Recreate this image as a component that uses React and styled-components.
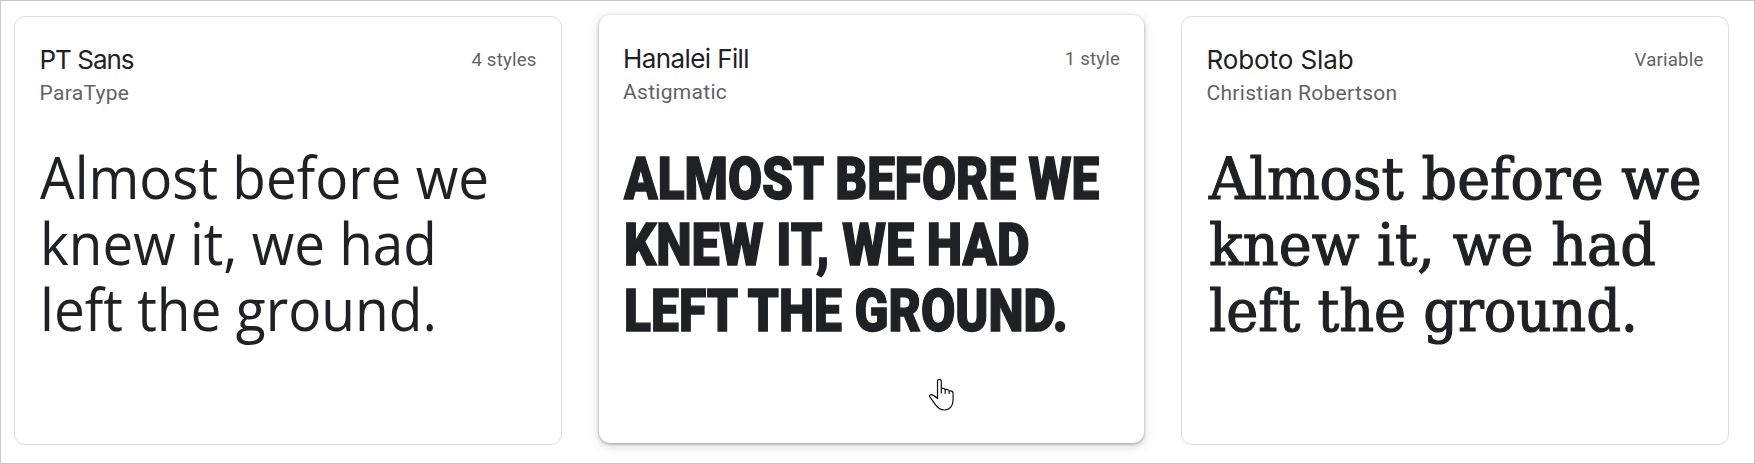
import React from 'react';
import styled, { createGlobalStyle, css } from 'styled-components';

const GlobalStyle = createGlobalStyle`
  * { box-sizing: border-box; }
  body { margin: 0; background: #fff; font-family: Roboto, "Liberation Sans", sans-serif; }
`;

const Page = styled.main`
  display: flex;
  align-items: flex-start;
  gap: 37px;
  width: 1755px;
  height: 464px;
  padding: 15px 13px;
  border: 1px solid #c9c9c9;
  overflow: hidden;
`;

const Card = styled.article`
  position: relative;
  flex: none;
  width: 548px;
  height: 429px;
  padding: 27px 24.5px 0 24.5px;
  border: 1px solid #dadce0;
  border-radius: 11px;
  background: #fff;
  ${(p) =>
    p.$raised &&
    css`
      width: 545px;
      height: 428px;
      margin-top: -1px;
      padding: 28px 24px 0 24px;
      border: 0;
      box-shadow: 0 1px 3px rgba(60, 64, 67, 0.45), 0 3px 9px 2px rgba(60, 64, 67, 0.14);
    `}
`;

const CardHeader = styled.header`
  display: flex;
  justify-content: space-between;
  align-items: flex-start;
  height: 63px;
`;

const FamilyName = styled.h2`
  margin: 0 0 3px;
  color: #202124;
  font-family: Inter, Roboto, sans-serif;
  font-size: 26px;
  font-weight: 400;
  line-height: 31px;
  padding-bottom: 1px;
  letter-spacing: ${(p) => p.$tracking}px;
`;

const Designer = styled.p`
  margin: 0;
  color: #5f6368;
  font-size: 21px;
  line-height: 28px;
  letter-spacing: 0.3px;
`;

const StyleCount = styled.span`
  margin-top: 4px;
  color: #5f6368;
  font-size: 18.6px;
  line-height: 24px;
  letter-spacing: 0.2px;
`;

const faces = {
  sans: css`
    padding-top: 37px;
    font: 400 58px/66px 'Open Sans', sans-serif;
    margin-left: 0.5px;
  `,
  display: css`
    padding-top: 40px;
    font: 900 59px/66px Roboto, sans-serif;
    -webkit-text-stroke: 1.4px #202124;
    margin-left: 0.5px;
  `,
  slab: css`
    padding-top: 39px;
    font: 400 57px/66px 'DejaVu Serif', serif;
    -webkit-text-stroke: 1.2px #202124;
    margin-left: 2px;
  `,
};

const Sample = styled.div`
  color: #202124;
  white-space: nowrap;
  ${(p) => faces[p.$face]}
`;

const SampleLine = styled.span`
  display: block;
  width: max-content;
  height: 66px;
  transform: scaleX(${(p) => p.$stretch});
  transform-origin: 0 50%;
`;

const Pointer = styled.svg`
  position: absolute;
  left: 329px;
  top: 363px;
  width: 27px;
  height: 34px;
`;

const families = [
  {
    name: 'PT Sans', tracking: -1, designer: 'ParaType', count: '4 styles', face: 'sans',
    lines: [['Almost before we', 0.946], ['knew it, we had', 0.945], ['left the ground.', 0.949]],
  },
  {
    name: 'Hanalei Fill', tracking: -0.6, designer: 'Astigmatic', count: '1 style', face: 'display', raised: true,
    lines: [['ALMOST BEFORE WE', 0.839], ['KNEW IT, WE HAD', 0.854], ['LEFT THE GROUND.', 0.845]],
  },
  {
    name: 'Roboto Slab', tracking: -0.1, designer: 'Christian Robertson', count: 'Variable', face: 'slab',
    lines: [['Almost before we', 0.975], ['knew it, we had', 0.978], ['left the ground.', 0.95]],
  },
];

function HandPointer() {
  return (
    <Pointer viewBox="0 0 27 34" fill="#fff" stroke="#111" strokeWidth="1.2" strokeLinejoin="round" strokeLinecap="round" aria-hidden="true">
      <path d="M9.500 20.500V3.200a1.900 1.900 0 0 1 3.800 0V15v-4.200c1.200-.8 3.400-.5 3.900 1v3.600-3.600c1.200-.8 3.400-.3 3.900 1.100v2.700-2.500c1.700-.8 4 .2 4 2.200v6.200c0 6.400-3.400 10.500-8.700 10.500-4.400 0-6.900-2.300-9.600-6.200l-4.700-6.600C.5 17.200 2.600 16 4.700 17.100c1.900 1 3.400 2.100 4.800 3.400z" />
    </Pointer>
  );
}

export default function App() {
  return (
    <>
      <GlobalStyle />
      <Page>
        {families.map((f) => (
          <Card key={f.name} $raised={f.raised}>
            <CardHeader>
              <div>
                <FamilyName $tracking={f.tracking}>{f.name}</FamilyName>
                <Designer>{f.designer}</Designer>
              </div>
              <StyleCount>{f.count}</StyleCount>
            </CardHeader>
            <Sample $face={f.face}>
              {f.lines.map(([text, stretch]) => (
                <SampleLine key={text} $stretch={stretch}>{text}</SampleLine>
              ))}
            </Sample>
            {f.raised && <HandPointer />}
          </Card>
        ))}
      </Page>
    </>
  );
}
